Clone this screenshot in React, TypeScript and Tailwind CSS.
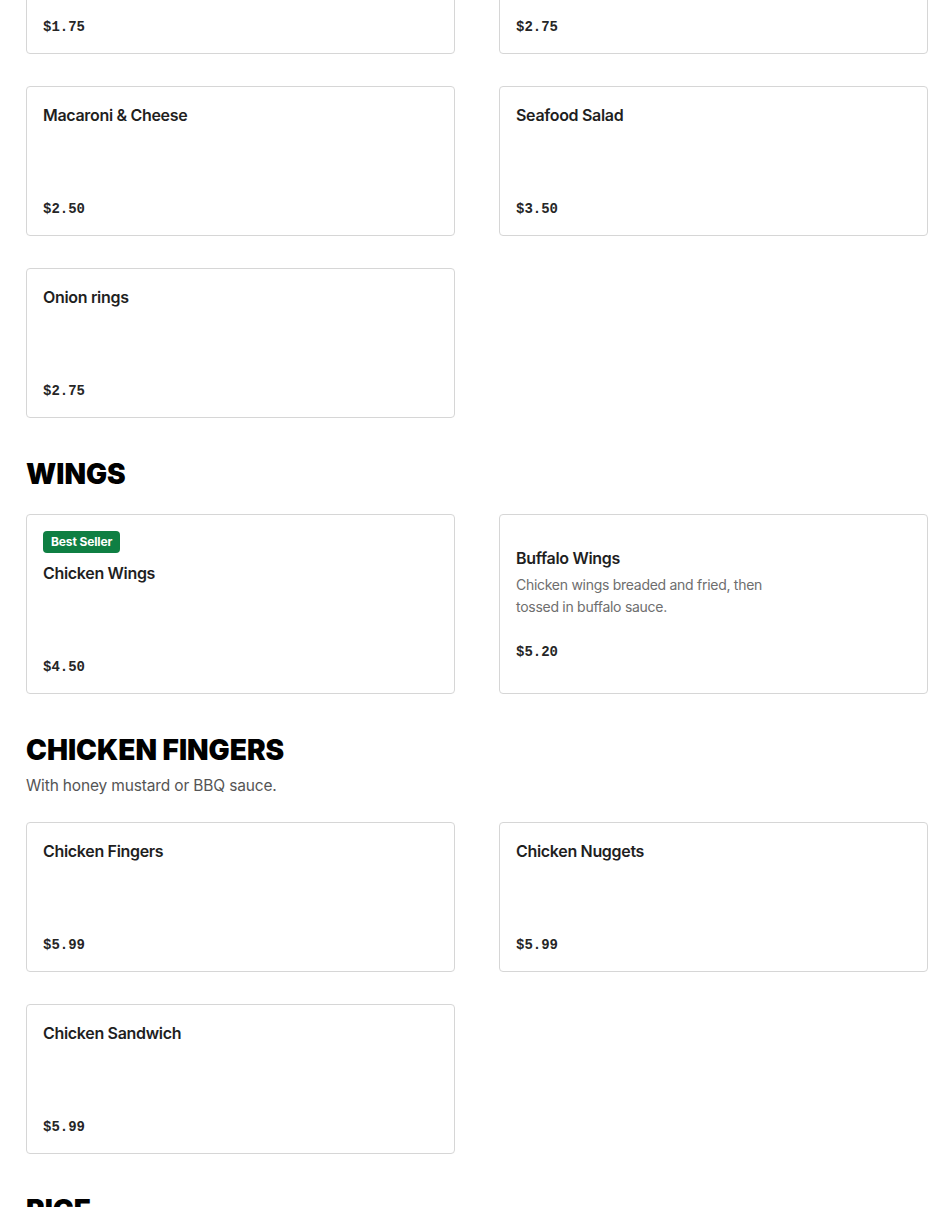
type Item = {
  name: string;
  price: string;
  description?: string;
  badge?: string;
};

type Section = {
  title: string;
  subtitle?: string;
  items: Item[];
};

const sections: Section[] = [
  {
    title: "SIDES",
    items: [
      { name: "French Fries", price: "$1.75" },
      { name: "Cheese Fries", price: "$2.75" },
      { name: "Macaroni & Cheese", price: "$2.50" },
      { name: "Seafood Salad", price: "$3.50" },
      { name: "Onion rings", price: "$2.75" },
    ],
  },
  {
    title: "WINGS",
    items: [
      { name: "Chicken Wings", price: "$4.50", badge: "Best Seller" },
      {
        name: "Buffalo Wings",
        price: "$5.20",
        description: "Chicken wings breaded and fried, then tossed in buffalo sauce.",
      },
    ],
  },
  {
    title: "CHICKEN FINGERS",
    subtitle: "With honey mustard or BBQ sauce.",
    items: [
      { name: "Chicken Fingers", price: "$5.99" },
      { name: "Chicken Nuggets", price: "$5.99" },
      { name: "Chicken Sandwich", price: "$5.99" },
    ],
  },
  {
    title: "RICE",
    items: [
      { name: "Fried Rice", price: "$3.99" },
      { name: "White Rice", price: "$1.99" },
    ],
  },
];

function MenuCard({ item }: { item: Item }) {
  return (
    <div className="flex flex-col justify-center rounded-[4px] border border-[#d6d6d6] bg-white p-4">
      {item.badge && (
        <div className="mb-2 self-start rounded-[4px] bg-[#0f7f43] px-2 py-[3px] text-[12px] font-bold leading-4 tracking-[-0.01em] text-white">
          {item.badge}
        </div>
      )}
      <div className="min-h-[74px]">
        <h3 className="text-[16px] font-semibold leading-6 tracking-[-0.02em] text-[#1f1f1f]">{item.name}</h3>
        {item.description && (
          <p className="mt-1 max-w-[270px] text-[14px] leading-[22px] tracking-[-0.02em] text-[#6e6e6e]">
            {item.description}
          </p>
        )}
      </div>
      <div className="mt-[22px] font-['Liberation_Mono',monospace] text-[14px] font-bold leading-5 text-[#262626]">
        {item.price}
      </div>
    </div>
  );
}

export default function App() {
  return (
    <div className="min-h-screen bg-white font-['Inter',sans-serif] text-[#1f1f1f]">
      <div className="-mt-[152px] flex flex-col gap-10 px-[26px] pr-[22px]">
        {sections.map((section) => (
          <section key={section.title}>
            <h2 className="text-[28px] font-black leading-8 text-black">{section.title}</h2>
            {section.subtitle && (
              <p className="mt-2 text-[15.5px] leading-6 tracking-[-0.01em] text-[#555555]">{section.subtitle}</p>
            )}
            <div className="mt-6 grid grid-cols-2 gap-x-11 gap-y-8">
              {section.items.map((item) => (
                <MenuCard key={item.name} item={item} />
              ))}
            </div>
          </section>
        ))}
      </div>
    </div>
  );
}
